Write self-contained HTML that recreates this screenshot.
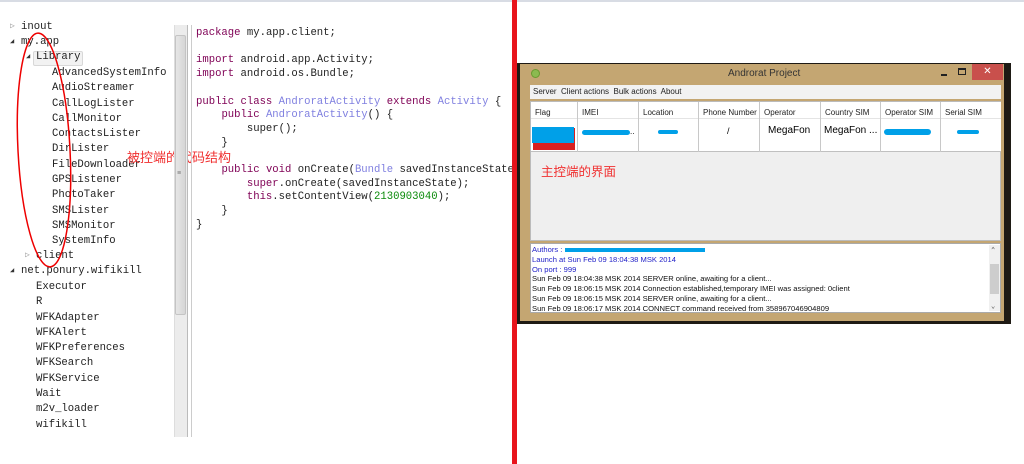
<!DOCTYPE html>
<html><head><meta charset="utf-8"><style>
*{margin:0;padding:0;box-sizing:border-box}
body{width:1024px;height:464px;background:#fff;position:relative;overflow:hidden;font-family:"Liberation Mono",monospace}
.a{position:absolute;white-space:nowrap}
.t{font-size:10.6px;color:#222;line-height:13px}
.c{font-size:10.6px;color:#222;line-height:13px;white-space:pre}
.k{color:#7f0055}
.ty{color:#8080e0}
.n{color:#0a8a0a}
.w{font-family:"Liberation Sans",sans-serif}
.cell{position:absolute;top:0;height:50px;border-right:1px solid #c8c8c8}
.hd{font-size:8px;color:#222;position:absolute;top:6px;left:4px}
.log{font-family:"Liberation Sans",sans-serif;font-size:7.6px;line-height:9.8px;color:#111}
.bl{position:absolute;background:#00a0e8;border-radius:3px}
</style></head><body>
<div class="a" style="left:0;top:0;width:1024px;height:2px;background:#d8dce4"></div>
<!-- tree -->
<div class="a" style="left:10px;top:21px;font-size:8px;color:#999">▷</div>
<div class="a" style="left:10px;top:37px;font-size:7px;color:#333">◢</div>
<div class="a" style="left:26px;top:52px;font-size:7px;color:#333">◢</div>
<div class="a" style="left:33px;top:51px;width:50px;height:15px;border:1px solid #d8d8d8;background:#f2f2f2;border-radius:2px"></div>
<div class="a" style="left:25px;top:250px;font-size:8px;color:#999">▷</div>
<div class="a" style="left:10px;top:266px;font-size:7px;color:#333">◢</div>
<div class="a t" style="left:21px;top:21px">inout</div>
<div class="a t" style="left:21px;top:36px">my.app</div>
<div class="a t" style="left:36px;top:51px">Library</div>
<div class="a t" style="left:52px;top:66px;line-height:15.3px">AdvancedSystemInfo<br>AudioStreamer<br>CallLogLister<br>CallMonitor<br>ContactsLister<br>DirLister<br>FileDownloader<br>GPSListener<br>PhotoTaker<br>SMSLister<br>SMSMonitor<br>SystemInfo</div>
<div class="a t" style="left:36px;top:250px">client</div>
<div class="a t" style="left:21px;top:265px">net.ponury.wifikill</div>
<div class="a t" style="left:36px;top:280px;line-height:15.3px">Executor<br>R<br>WFKAdapter<br>WFKAlert<br>WFKPreferences<br>WFKSearch<br>WFKService<br>Wait<br>m2v_loader<br>wifikill</div>
<svg class="a" style="left:0;top:0" width="260" height="270"><ellipse cx="44" cy="150" rx="26" ry="117" fill="none" stroke="#e00" stroke-width="1.5" transform="rotate(-3 44 150)"/></svg>
<div class="a w" style="left:127px;top:147px;font-family:'Liberation Sans','Noto Sans CJK SC',sans-serif;font-size:13px;color:#f03030">被控端的代码结构</div>
<!-- scrollbar -->
<div class="a" style="left:174px;top:25px;width:13px;height:412px;background:#ececec;border-left:1px solid #ddd"></div>
<div class="a" style="left:175px;top:35px;width:11px;height:280px;background:linear-gradient(90deg,#e6e6e6,#d6d6d6);border:1px solid #c4c4c4;border-radius:2px"></div>
<div class="a" style="left:177px;top:170px;font-size:7px;color:#777">≡</div>
<div class="a" style="left:187px;top:25px;width:1px;height:412px;background:#bbb"></div>
<div class="a" style="left:191px;top:25px;width:1px;height:412px;background:#ccc"></div>
<!-- code -->
<div class="a c" style="left:196px;top:27px;line-height:13.7px"><span class="k">package</span> my.app.client;

<span class="k">import</span> android.app.Activity;
<span class="k">import</span> android.os.Bundle;

<span class="k">public class</span> <span class="ty">AndroratActivity</span> <span class="k">extends</span> <span class="ty">Activity</span> {
    <span class="k">public</span> <span class="ty">AndroratActivity</span>() {
        super();
    }

    <span class="k">public void</span> onCreate(<span class="ty">Bundle</span> savedInstanceState
        <span class="k">super</span>.onCreate(savedInstanceState);
        <span class="k">this</span>.setContentView(<span class="n">2130903040</span>);
    }
}</div>
<div class="a" style="left:512px;top:0;width:5px;height:464px;background:#e8141c"></div>
<!-- window -->
<div class="a" style="left:517px;top:63px;width:494px;height:261px;background:#1e1a14"></div>
<div class="a" style="left:520px;top:64px;width:484px;height:257px;background:#c4a672"></div>
<div class="a" style="left:531px;top:69px;width:9px;height:9px;border-radius:50%;background:#8cba50;border:1px solid #6a9a30"></div>
<div class="a w" style="left:728px;top:68px;font-size:10px;color:#333">Androrat Project</div>
<div class="a" style="left:941px;top:74px;width:6px;height:2px;background:#222"></div>
<div class="a" style="left:958px;top:68px;width:8px;height:7px;border:1px solid #222;border-top-width:2px"></div>
<div class="a" style="left:972px;top:64px;width:31px;height:16px;background:#c9504c;color:#fff;font-size:10px;text-align:center;line-height:16px;font-family:'Liberation Sans',sans-serif">✕</div>
<div class="a w" style="left:530px;top:85px;width:471px;height:14px;background:#f2f2f2;font-size:8px;color:#222;padding:2px 3px;white-space:pre">Server  Client actions  Bulk actions  About</div>
<div class="a" style="left:530px;top:101px;width:471px;height:140px;background:#efefef;border:1px solid #bbb"></div>
<div class="a w" style="left:531px;top:102px;width:470px;height:50px;background:#fff;border-bottom:1px solid #c0c0c0">
 <div class="a" style="left:0;top:16px;width:470px;height:1px;background:#e4e4e4"></div>
 <div class="cell" style="left:0;width:47px"><span class="hd">Flag</span><div class="a" style="left:2px;top:26px;width:42px;height:22px;background:#d82020"></div><div class="a" style="left:1px;top:25px;width:42px;height:16px;background:#00a0e8"></div></div>
 <div class="cell" style="left:47px;width:61px"><span class="hd">IMEI</span><div class="bl" style="left:4px;top:28px;width:48px;height:5px"></div><span class="a" style="left:52px;top:25px;font-size:8px">..</span></div>
 <div class="cell" style="left:108px;width:60px"><span class="hd">Location</span><div class="bl" style="left:19px;top:28px;width:20px;height:4px"></div></div>
 <div class="cell" style="left:168px;width:61px"><span class="hd">Phone Number</span><span class="a" style="left:28px;top:24px;font-size:9px">/</span></div>
 <div class="cell" style="left:229px;width:61px"><span class="hd">Operator</span><span class="a" style="left:8px;top:23px;font-size:10px">MegaFon</span></div>
 <div class="cell" style="left:290px;width:60px"><span class="hd">Country SIM</span><span class="a" style="left:3px;top:23px;font-size:10px">MegaFon ...</span></div>
 <div class="cell" style="left:350px;width:60px"><span class="hd">Operator SIM</span><div class="bl" style="left:3px;top:27px;width:47px;height:6px"></div></div>
 <div class="cell" style="left:410px;width:60px;border-right:none"><span class="hd">Serial SIM</span><div class="bl" style="left:16px;top:28px;width:22px;height:4px"></div></div>
</div>
<div class="a w" style="left:541px;top:161px;font-family:'Liberation Sans','Noto Sans CJK SC',sans-serif;font-size:12.5px;color:#f03030">主控端的界面</div>
<div class="a" style="left:530px;top:243px;width:471px;height:70px;background:#fff;border:1px solid #aaa"></div>
<div class="a" style="left:989px;top:245px;width:11px;height:66px;background:#f0f0f0"></div>
<div class="a" style="left:990px;top:264px;width:9px;height:30px;background:#cdcdcd"></div>
<div class="a" style="left:991px;top:246px;font-size:7px;color:#444">⌃</div>
<div class="a" style="left:991px;top:302px;font-size:7px;color:#444">⌄</div>
<div class="a log" style="left:532px;top:245px"><span style="color:#2323c8">Authors : </span><span style="display:inline-block;width:140px;height:4px;background:#00a0e8;vertical-align:middle"></span><br><span style="color:#2323c8">Launch at Sun Feb 09 18:04:38 MSK 2014</span><br><span style="color:#2323c8">On port : 999</span><br>Sun Feb 09 18:04:38 MSK 2014 SERVER online, awaiting for a client...<br>Sun Feb 09 18:06:15 MSK 2014 Connection established,temporary IMEI was assigned: 0client<br>Sun Feb 09 18:06:15 MSK 2014 SERVER online, awaiting for a client...<br>Sun Feb 09 18:06:17 MSK 2014 CONNECT command received from 358967046904809</div>
</body></html>
